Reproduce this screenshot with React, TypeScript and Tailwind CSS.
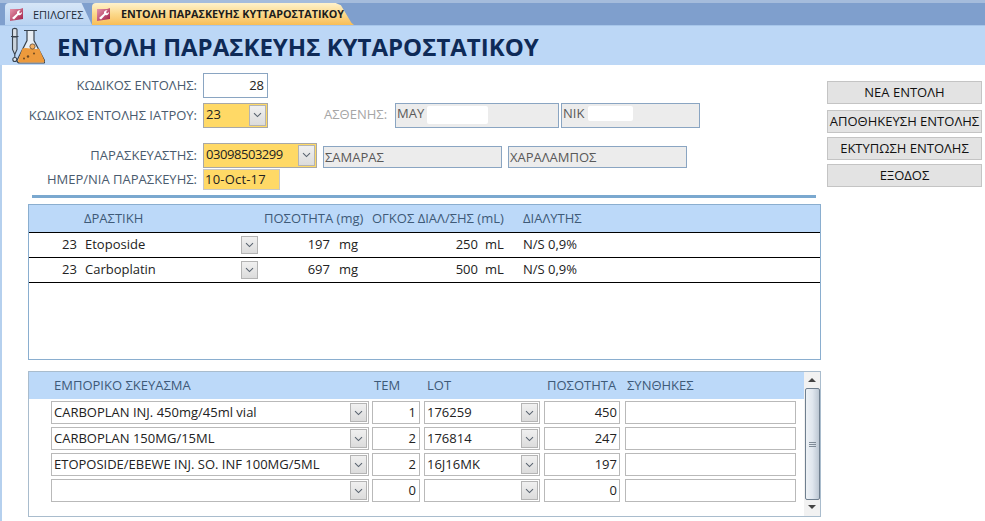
import React from "react";

function Chevron() {
  return (
    <svg width="9" height="6" viewBox="0 0 9 6" fill="none">
      <path d="M1 1.2 L4.500 4.600 L8 1.200" stroke="#5a6470" strokeWidth="1.100" />
    </svg>
  );
}

function Arrow({ className = "" }: { className?: string }) {
  return (
    <div className={"flex items-center justify-center shrink-0 border border-[#b4b4b4] bg-gradient-to-b from-[#f0f0f0] to-[#dcdcdc] " + className}>
      <Chevron />
    </div>
  );
}

function AccessIcon() {
  return (
    <svg width="15" height="15" viewBox="0 0 15 15" className="shrink-0">
      <defs>
        <linearGradient id="acc" x1="0" y1="0" x2="1" y2="1">
          <stop offset="0" stopColor="#e89ab0" />
          <stop offset="1" stopColor="#a01c44" />
        </linearGradient>
      </defs>
      <path d="M1 2 H11 L14 1 V12 L1 14 Z" fill="url(#acc)" />
      <path d="M3 11 L8 6.500 C7.600 4.800 9 3 11.500 3.400 L10 5 L11 6.400 L13 5 C13.200 7.400 11 8.800 9.200 8 L5 12.600 Z" fill="#fff" />
    </svg>
  );
}

function FlaskIcon() {
  return (
    <svg width="38" height="37" viewBox="0 0 38 36" className="shrink-0">
      <path d="M5.500 2 C5.500 0.500 10 0.500 10 2 V9 H5.500 Z" fill="#d9dfe6" stroke="#39434e" strokeWidth="1.100" />
      <path d="M4 9 H11.500 M5.500 9.500 V22 L7.800 27 L10 22 V9.500 Z" fill="#c9d3dd" stroke="#39434e" strokeWidth="1.100" />
      <path d="M7.800 27 V30" stroke="#39434e" strokeWidth="1.100" />
      <circle cx="7.800" cy="32" r="2" fill="#dfe7ef" stroke="#39434e" strokeWidth="1.100" />
      <path d="M17 3 H30 M20 3.500 V13 L10 33 C10 35 11 35.500 13 35.500 H37 C38 35 38 34 37 32 L27 13 V3.500" fill="#e8eef4" stroke="#39434e" strokeWidth="1.200" />
      <path d="M15.500 21 C20 19 26 23 32 21 L37.300 33 C37.600 34.600 37 35 36 35 H13 C11 35 10.700 34 11.300 32.500 Z" fill="#ed9a3c" />
      <circle cx="25.500" cy="19" r="2.600" fill="#f3b063" stroke="#5d4630" strokeWidth="0.800" />
      <circle cx="21" cy="29" r="1.200" fill="#6e4a22" />
      <circle cx="27" cy="26" r="1" fill="#6e4a22" />
      <circle cx="17" cy="31" r="1" fill="#6e4a22" />
    </svg>
  );
}

function Label({ children }: { children: React.ReactNode }) {
  return <div className="w-[197px] shrink-0 text-right text-[#4a5b6e] text-[13px] leading-none">{children}</div>;
}

function ReadOnly({ text, className, cover }: { text: string; className: string; cover?: string }) {
  return (
    <div className={"relative shrink-0 bg-[#ececec] border border-[#8aa5c2] text-[#595959] text-[13px] px-[1px] " + className}>
      {text}
      {cover ? <div className={"absolute bg-white top-[2px] rounded-[2px] " + cover} /> : null}
    </div>
  );
}

function Button({ children, className }: { children: React.ReactNode; className: string }) {
  return (
    <div className={"h-[23px] w-[155px] bg-[#e3e3e3] border border-[#c4c4c4] text-[#111] text-[13px] whitespace-nowrap flex items-center justify-center " + className}>
      {children}
    </div>
  );
}

function DrugRow({ name, qty, vol }: { name: string; qty: string; vol: string }) {
  return (
    <div className="flex items-center h-[25px] border-b border-black text-[13px] text-[#222] pl-[33px]">
      <div className="w-[14px] text-right">23</div>
      <div className="w-[156px] ml-[9px]">{name}</div>
      <Arrow className="w-[17px] h-[18px]" />
      <div className="w-[72px] text-right">{qty}</div>
      <div className="w-[18px] ml-[9px]">mg</div>
      <div className="w-[121px] text-right">{vol}</div>
      <div className="ml-[7px] w-[20px]">mL</div>
      <div className="ml-[18px]">N/S 0,9%</div>
    </div>
  );
}

function ProductRow({ name, tem, lot, qty }: { name: string; tem: string; lot: string; qty: string }) {
  const box = "h-[23px] border border-[#b9b9b9] bg-white shrink-0 flex items-center text-[13px] text-[#222]";
  return (
    <div className="flex h-[23px] mb-[3px] ml-[22px]">
      <div className={box + " w-[318px] pl-[2px] pr-[1px] justify-between"}>
        <span>{name}</span>
        <Arrow className="w-[17px] h-[19px]" />
      </div>
      <div className={box + " w-[48px] ml-[3px] justify-end pr-[3px]"}>{tem}</div>
      <div className={box + " w-[116px] ml-[4px] pl-[2px] pr-[1px] justify-between"}>
        <span>{lot}</span>
        <Arrow className="w-[17px] h-[19px]" />
      </div>
      <div className={box + " w-[76px] ml-[4px] justify-end pr-[2px]"}>{qty}</div>
      <div className={box + " w-[171px] ml-[5px]"} />
    </div>
  );
}

export default function App() {
  return (
    <div
      className="w-[985px] h-[521px] overflow-hidden bg-white flex flex-col"
      style={{ fontFamily: "'Open Sans','Noto Sans',sans-serif" }}
    >
      {/* tabs */}
      <div className="h-[26px] shrink-0 bg-[#7f9fcd] flex items-end pl-[5px] border-t-[3px] border-t-[#a5bcdc] border-b border-b-[#a7c6ea]">
        <div className="h-[22px] w-[87px] rounded-tl-[4px] bg-gradient-to-b from-[#d7e6f7] to-[#b8d3f2] [clip-path:polygon(0_0,88%_0,100%_100%,0_100%)] flex items-center pl-[4px] gap-[9px]">
          <AccessIcon />
          <span className="text-[11px] text-[#1c2b3a] leading-none">ΕΠΙΛΟΓΕΣ</span>
        </div>
        <div className="h-[22px] w-[262px] rounded-tl-[4px] bg-gradient-to-b from-[#fff2cc] via-[#fbd98b] to-[#f8bd55] [clip-path:polygon(0_0,93%_0,95%_10%,97%_50%,99%_90%,100%_100%,0_100%)] flex items-center pl-[4px] gap-[10px]">
          <AccessIcon />
          <span className="text-[10.800px] font-bold text-[#1c1c1c] leading-none whitespace-nowrap">ΕΝΤΟΛΗ ΠΑΡΑΣΚΕΥΗΣ ΚΥΤΤΑΡΟΣΤΑΤΙΚΟΥ</span>
        </div>
      </div>

      {/* title */}
      <div className="h-[39px] shrink-0 bg-[#bcd7f6] flex items-center pl-[7px]">
        <FlaskIcon />
        <h1 className="ml-[12px] mt-[3px] text-[24px] font-bold text-[#0e2a57] leading-none whitespace-nowrap">ΕΝΤΟΛΗ ΠΑΡΑΣΚΕΥΗΣ ΚΥΤΑΡΟΣΤΑΤΙΚΟΥ</h1>
      </div>

      {/* body */}
      <div className="flex-1 flex border-l-[2px] border-[#b5d0ee]">
        <div className="w-[825px] shrink-0 pt-[8px]">
          <div className="flex items-center h-[25px]">
            <div className="-ml-[2px]"><Label>ΚΩΔΙΚΟΣ ΕΝΤΟΛΗΣ:</Label></div>
            <div className="ml-[6px] w-[65px] h-[25px] border border-[#8aa5c2] bg-white text-right pr-[3px] text-[13px] text-[#222] leading-[23px]">28</div>
          </div>
          <div className="flex items-center h-[26px] mt-[4px]">
            <div className="-ml-[2px]"><Label>ΚΩΔΙΚΟΣ ΕΝΤΟΛΗΣ ΙΑΤΡΟΥ:</Label></div>
            <div className="ml-[6px] w-[65px] h-[25px] border border-[#a8a8a8] bg-[#ffd966] flex items-center justify-between pl-[2px] pr-[1px] text-[13px] text-[#222]">
              <span>23</span>
              <Arrow className="w-[17px] h-[21px]" />
            </div>
            <div className="ml-[56px] w-[63px] text-[13px] text-[#a6a6a6] whitespace-nowrap">ΑΣΘΕΝΗΣ:</div>
            <ReadOnly text="ΜΑΥ" className="ml-[8px] w-[164px] h-[25px] leading-[18px]" cover="left-[31px] w-[61px] bottom-[3px]" />
            <ReadOnly text="ΝΙΚ" className="ml-[2px] w-[139px] h-[25px] leading-[18px]" cover="left-[26px] w-[45px] bottom-[6px]" />
          </div>
          <div className="flex items-center h-[26px] mt-[14px]">
            <div className="-ml-[2px]"><Label>ΠΑΡΑΣΚΕΥΑΣΤΗΣ:</Label></div>
            <div className="ml-[6px] w-[114px] h-[25px] border border-[#a8a8a8] bg-[#ffd966] flex items-center justify-between pl-[2px] pr-[1px] text-[13px] text-[#222]">
              <span className="tracking-[-0.45px]">03098503299</span>
              <Arrow className="w-[17px] h-[21px]" />
            </div>
            <ReadOnly text="ΣΑΜΑΡΑΣ" className="ml-[6px] mt-[4px] w-[179px] h-[22px] leading-[20px]" />
            <ReadOnly text="ΧΑΡΑΛΑΜΠΟΣ" className="ml-[6px] mt-[4px] w-[179px] h-[22px] leading-[20px]" />
          </div>
          <div className="flex items-center h-[22px]">
            <div className="-ml-[2px]"><Label>ΗΜΕΡ/ΝΙΑ ΠΑΡΑΣΚΕΥΗΣ:</Label></div>
            <div className="ml-[6px] w-[77px] h-[21px] border border-[#c8c8c8] bg-[#ffd966] pl-[1px] text-[13px] text-[#222] leading-[19px] tracking-[0.2px]">10-Oct-17</div>
          </div>
          <div className="h-[3px] bg-[#7aa8cf] ml-[30px] w-[784px] mt-[5px]" />

          {/* panel 1 */}
          <div className="ml-[26px] w-[793px] h-[156px] mt-[6px] border border-[#8aaecf] bg-white">
            <div className="h-[28px] bg-[#bcd9f9] border-b border-black flex items-center text-[13px] text-[#3e5a78] whitespace-nowrap">
              <div className="ml-[55px] w-[180px]">ΔΡΑΣΤΙΚΗ</div>
              <div className="w-[108px]">ΠΟΣΟΤΗΤΑ (mg)</div>
              <div className="w-[151px]">ΟΓΚΟΣ ΔΙΑΛ/ΣΗΣ (mL)</div>
              <div>ΔΙΑΛΥΤΗΣ</div>
            </div>
            <DrugRow name="Etoposide" qty="197" vol="250" />
            <DrugRow name="Carboplatin" qty="697" vol="500" />
          </div>

          {/* panel 2 */}
          <div className="relative ml-[26px] w-[793px] h-[146px] mt-[11px] border border-[#a9bccd] bg-white">
            <div className="h-[27px] mr-[16px] bg-[#bcd9f9] flex items-center text-[13px] text-[#3e5a78] whitespace-nowrap mb-[2px]">
              <div className="ml-[25px] w-[320px]">ΕΜΠΟΡΙΚΟ ΣΚΕΥΑΣΜΑ</div>
              <div className="w-[53px]">ΤΕΜ</div>
              <div className="w-[120px]">LOT</div>
              <div className="w-[80px]">ΠΟΣΟΤΗΤΑ</div>
              <div>ΣΥΝΘΗΚΕΣ</div>
            </div>
            <ProductRow name="CARBOPLAN INJ. 450mg/45ml vial" tem="1" lot="176259" qty="450" />
            <ProductRow name="CARBOPLAN 150MG/15ML" tem="2" lot="176814" qty="247" />
            <ProductRow name="ETOPOSIDE/EBEWE INJ. SO. INF 100MG/5ML" tem="2" lot="16J16MK" qty="197" />
            <ProductRow name="" tem="0" lot="" qty="0" />
            {/* scrollbar */}
            <div className="absolute right-0 top-0 bottom-0 w-[16px] bg-[#f2f2f2] flex flex-col items-center">
              <div className="h-[16px] flex items-center justify-center">
                <div className="w-0 h-0 border-x-[4px] border-x-transparent border-b-[4px] border-b-[#444]" />
              </div>
              <div className="w-[15px] h-[112px] rounded-[2px] border border-[#6f7f8f] bg-gradient-to-r from-[#eef2f6] via-[#dfe6ee] to-[#bcc7d3] flex flex-col items-center justify-center gap-[1px]">
                <div className="w-[7px] h-px bg-[#7f8b97]" />
                <div className="w-[7px] h-px bg-[#7f8b97]" />
                <div className="w-[7px] h-px bg-[#7f8b97]" />
              </div>
              <div className="h-[14px] flex items-center justify-center">
                <div className="w-0 h-0 border-x-[4px] border-x-transparent border-t-[4px] border-t-[#444]" />
              </div>
            </div>
          </div>
        </div>

        {/* buttons */}
        <div className="pt-[16px] flex flex-col">
          <Button className="">ΝΕΑ ΕΝΤΟΛΗ</Button>
          <Button className="mt-[6px]">ΑΠΟΘΗΚΕΥΣΗ ΕΝΤΟΛΗΣ</Button>
          <Button className="mt-[4px]">ΕΚΤΥΠΩΣΗ ΕΝΤΟΛΗΣ</Button>
          <Button className="mt-[4px]">ΕΞΟΔΟΣ</Button>
        </div>
      </div>
    </div>
  );
}
